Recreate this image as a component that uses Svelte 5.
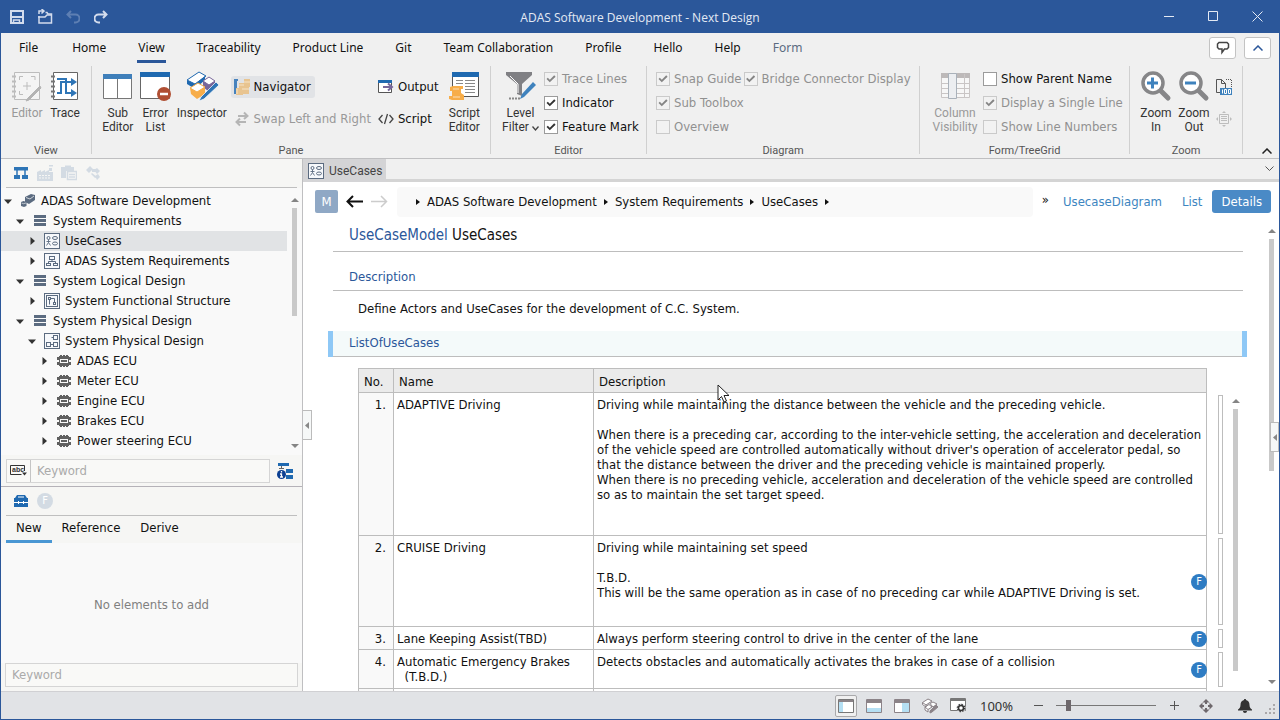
<script>
  const menu = ['File', 'Home', 'View', 'Traceability', 'Product Line', 'Git', 'Team Collaboration', 'Profile', 'Hello', 'Help', 'Form'];

  const tree = [
    { level: 0, open: true, icon: 'project', label: 'ADAS Software Development' },
    { level: 1, open: true, icon: 'stack', label: 'System Requirements' },
    { level: 2, open: false, icon: 'usecase', label: 'UseCases', selected: true },
    { level: 2, open: false, icon: 'hierarchy', label: 'ADAS System Requirements' },
    { level: 1, open: true, icon: 'stack', label: 'System Logical Design' },
    { level: 2, open: false, icon: 'functional', label: 'System Functional Structure' },
    { level: 1, open: true, icon: 'stack', label: 'System Physical Design' },
    { level: 2, open: true, icon: 'physical', label: 'System Physical Design' },
    { level: 3, open: false, icon: 'chip', label: 'ADAS ECU' },
    { level: 3, open: false, icon: 'chip', label: 'Meter ECU' },
    { level: 3, open: false, icon: 'chip', label: 'Engine ECU' },
    { level: 3, open: false, icon: 'chip', label: 'Brakes ECU' },
    { level: 3, open: false, icon: 'chip', label: 'Power steering ECU' },
    { level: 3, open: false, icon: 'chip', label: '' }
  ];

  const crumbs = ['ADAS Software Development', 'System Requirements', 'UseCases'];

  const rows = [
    {
      name: ['ADAPTIVE Driving'],
      height: 143,
      lines: [
        'Driving while maintaining the distance between the vehicle and the preceding vehicle.',
        '',
        'When there is a preceding car, according to the inter-vehicle setting, the acceleration and deceleration',
        "of the vehicle speed are controlled automatically without driver's operation of accelerator pedal, so",
        'that the distance between the driver and the preceding vehicle is maintained properly.',
        'When there is no preceding vehicle, acceleration and deceleration of the vehicle speed are controlled',
        'so as to maintain the set target speed.'
      ]
    },
    {
      name: ['CRUISE Driving'],
      height: 91,
      feature: true,
      lines: [
        'Driving while maintaining set speed',
        '',
        'T.B.D.',
        'This will be the same operation as in case of no preceding car while ADAPTIVE Driving is set.'
      ]
    },
    {
      name: ['Lane Keeping Assist(TBD)'],
      height: 23,
      feature: true,
      lines: ['Always perform steering control to drive in the center of the lane']
    },
    {
      name: ['Automatic Emergency Brakes', '  (T.B.D.)'],
      height: 39,
      feature: true,
      lines: ['Detects obstacles and automatically activates the brakes in case of a collision']
    }
  ];

  let zoom = $state(10);
</script>

{#snippet usecase()}
  <svg width="16" height="16" viewBox="0 0 16 16" fill="none" stroke="#5b6b80">
    <rect x=".5" y=".5" width="15" height="15" fill="#f6f8fb" />
    <circle cx="4.500" cy="5" r="1.500" /><path d="M4.500 6.500v3M2.500 8.500h4M4.500 9.500l-2 3M4.500 9.500l2 3" stroke-width=".9" />
    <ellipse cx="11" cy="5" rx="2.500" ry="1.500" /><ellipse cx="11" cy="10.500" rx="2.500" ry="1.500" />
  </svg>
{/snippet}

{#snippet treeIcon(name)}
  {#if name === 'usecase'}
    {@render usecase()}
  {:else if name === 'project'}
    <svg width="16" height="16" viewBox="0 0 16 16" fill="#5b6b80">
      <path d="M5 4l6-3 4 1v5l-6 4-4-2z" /><path d="M6 4.500l4 1.500 4-3" fill="none" stroke="#fff" stroke-width=".7" />
      <path d="M1 9l2.500-1 3 1v4l-2.500 1-3-1z" /><path d="M1.500 10l2 .7 2.500-.7" fill="none" stroke="#fff" stroke-width=".6" />
    </svg>
  {:else if name === 'stack'}
    <svg width="12" height="12" viewBox="0 0 12 12" fill="#5b6b80"><path d="M0 0h12v3H0zM0 4h12v3H0zM0 8h12v3H0z" /></svg>
  {:else if name === 'hierarchy'}
    <svg width="16" height="16" viewBox="0 0 16 16" fill="none" stroke="#5b6b80">
      <rect x=".5" y=".5" width="15" height="15" fill="#f6f8fb" />
      <rect x="5.500" y="3.500" width="5" height="3" /><path d="M8 6.500v2M4.500 10.500v-2h7v2" /><rect x="2.500" y="10.500" width="4" height="2" /><rect x="9.500" y="10.500" width="4" height="2" />
    </svg>
  {:else if name === 'functional'}
    <svg width="16" height="16" viewBox="0 0 16 16" fill="none" stroke="#5b6b80">
      <rect x=".5" y=".5" width="15" height="15" fill="#f6f8fb" /><rect x="2.500" y="2.500" width="11" height="11" />
      <rect x="4.500" y="4.500" width="2" height="2" /><path d="M5.500 6.500v5M7 5.500h3.500v4" /><rect x="9.500" y="9.500" width="2" height="2" />
    </svg>
  {:else if name === 'physical'}
    <svg width="16" height="16" viewBox="0 0 16 16" fill="none" stroke="#5b6b80">
      <rect x=".5" y=".5" width="15" height="15" fill="#f6f8fb" />
      <rect x="9.500" y="2.500" width="4" height="4" /><rect x="2.500" y="9.500" width="4" height="4" /><rect x="9.500" y="9.500" width="4" height="4" /><path d="M6.500 11.500h3M9.500 4.500h-2" />
    </svg>
  {:else}
    <svg width="14" height="12" viewBox="0 0 14 12" fill="#606060">
      <path d="M2 1h10v10H2z" /><path d="M3 0h2v2H3zM6 0h2v2H6zM9 0h2v2H9zM3 10h2v2H3zM6 10h2v2H6zM9 10h2v2H9zM0 2h3v3H0zM0 7h3v3H0zM11 2h3v3h-3zM11 7h3v3h-3z" />
      <path d="M3 4h8v4H3z" fill="#f9f9f9" /><path d="M4 5h6v2H4z" />
    </svg>
  {/if}
{/snippet}

{#snippet check(label, checked, disabled)}
  <label class="check" class:off={disabled}><input type="checkbox" {checked} {disabled} /><span>{label}</span></label>
{/snippet}

{#snippet toolbox(color)}
  <svg width="14" height="14" viewBox="0 0 14 14">
    <path d="M3 1h8l2 3h1v9H0V4h1z" fill={color} /><path d="M4 3h6" stroke="#fff" /><path d="M0 8.500h4M5 8.500h4M10 8.500h4M4.500 7v3M9.500 7v3" stroke="#fff" />
  </svg>
{/snippet}

{#snippet magnifier(plus)}
  <svg width="32" height="32" viewBox="0 0 32 32" fill="none">
    <path d="M21 21l7 7" stroke="#868688" stroke-width="5" stroke-linecap="round" />
    <circle cx="13" cy="13" r="10" fill="#fff" stroke="#868688" stroke-width="3.500" />
    <path d={plus ? 'M7 13h11M12.500 7.500v11' : 'M7 13h11'} stroke="#3f82bd" stroke-width="3" />
  </svg>
{/snippet}

<div class="window">
  <header class="titlebar">
    <div class="quick">
      <button aria-label="Save"><svg width="14" height="14" viewBox="0 0 14 14" fill="none" stroke="#d3dced" stroke-width="2"><path d="M1 1h12v12H1zM2 7h10" /><path d="M3.500 13v-3h6v3" stroke-width="1.500" /></svg></button>
      <button aria-label="Open"><svg width="15" height="15" viewBox="0 0 15 15" fill="none" stroke="#d3dced" stroke-width="1.500"><path d="M1 7v7h12.500V5H10L9 3.500H7.500" /><path d="M0 8h7l2-2h5M1 5V2h5M3.500 0L6 2 3.500 4.500" /></svg></button>
      <button aria-label="Undo" class="dim"><svg width="14" height="14" viewBox="0 0 14 14" fill="none" stroke="#d3dced" stroke-width="2"><path d="M5 1L1.500 4.500 5 8M1.500 4.500h8a3.500 3.500 0 0 1 0 8H8" /></svg></button>
      <button aria-label="Redo"><svg width="14" height="14" viewBox="0 0 14 14" fill="none" stroke="#d3dced" stroke-width="2"><path d="M9 1l3.500 3.500L9 8M12.500 4.500h-8a3.500 3.500 0 0 0 0 8H6" /></svg></button>
    </div>
    <h1>ADAS Software Development - Next Design</h1>
    <div class="sys">
      <button aria-label="Minimize"><svg width="11" height="11" viewBox="0 0 11 11" stroke="#e4eaf4"><path d="M0 5.500h10" /></svg></button>
      <button aria-label="Maximize"><svg width="11" height="11" viewBox="0 0 11 11" fill="none" stroke="#e4eaf4"><path d="M.5.5h9v9h-9z" /></svg></button>
      <button aria-label="Close"><svg width="11" height="11" viewBox="0 0 11 11" stroke="#e4eaf4"><path d="M.5.5l10 10M10.500.5l-10 10" /></svg></button>
    </div>
  </header>

  <nav class="menu">
    {#each menu as item}
      <button class:active={item === 'View'} class:context={item === 'Form'}>{item}</button>
    {/each}
    <div class="menuend">
      <button aria-label="Feedback"><svg width="14" height="14" viewBox="0 0 14 14" fill="none" stroke="#444" stroke-width="1.500"><path d="M3 1.500h8l1.500 1.500v3.500L11 8H8.500L6 11.500V8H3L1.500 6.500V3z" /></svg></button>
      <button aria-label="Hide tabs"><svg width="10" height="6" viewBox="0 0 10 6" fill="none" stroke="#2b579a" stroke-width="1.500"><path d="M.5 5.500L5 1l4.500 4.500" /></svg></button>
    </div>
  </nav>

  <section class="ribbon" aria-label="Ribbon">
    <div class="group view">
      <div class="body">
        <button class="big" disabled>
          <svg width="32" height="32" viewBox="0 0 32 32" fill="none" stroke="#bcbcbc">
            <path d="M3.500 2.500h25v27h-25z" fill="#f4f4f4" /><path d="M1 6.500h4M1 11.500h4M1 16.500h4M1 21.500h4M1 26.500h4" stroke-width="2" />
            <path d="M8.500 10V6.500H12M20 6.500h4V10M8.500 21v3.500H12M16 12v8M12 16h8" /><path d="M29 16l-12 12-2 3 3-1 12-12z" fill="#b4b4b4" stroke="#b4b4b4" />
          </svg><span>Editor</span>
        </button>
        <button class="big">
          <svg width="32" height="32" viewBox="0 0 32 32" fill="none">
            <path d="M4.500 2.500h24v27h-24z" fill="#fff" stroke="#666" /><path d="M2 6.500h4M2 11.500h4M2 16.500h4M2 21.500h4M2 26.500h4" stroke="#777" stroke-width="2" />
            <path d="M8 9h9v14h7M8 23h4V12h12" stroke="#2e75b6" stroke-width="2" /><path d="M22 8l6 4-6 4zM22 19l6 4-6 4z" fill="#2e75b6" />
          </svg><span>Trace</span>
        </button>
      </div>
      <div class="caption">View</div>
    </div>

    <div class="group pane">
      <div class="body">
        <button class="big">
          <svg width="32" height="32" viewBox="0 0 32 32"><path d="M1.500 4.500h28v24h-28z" fill="#fff" stroke="#777" /><path d="M1 4h29v5H1z" fill="#3f7fba" /><path d="M15.500 9v20" stroke="#777" /></svg><span>Sub<br />Editor</span>
        </button>
        <button class="big">
          <svg width="32" height="32" viewBox="0 0 32 32"><path d="M1.500 2.500h29v26h-29z" fill="#fff" stroke="#666" /><path d="M1 2h30v5H1z" fill="#1f69b0" /><circle cx="25" cy="24" r="7" fill="#b04f33" /><path d="M21 24h8" stroke="#fff" stroke-width="2.500" /></svg><span>Error<br />List</span>
        </button>
        <button class="big wide">
          <svg width="34" height="32" viewBox="0 0 34 32" stroke-linejoin="round">
            <path d="M2 10L14 2l7 4-11 8z" fill="#fff" stroke="#1f69b0" /><path d="M2 10v4l8 5v-5z" fill="#1f69b0" /><path d="M10 14l10-8v4l-8 7z" fill="#1f69b0" />
            <path d="M18 11l6-4 6 4-6 4z" fill="#fff" stroke="#77669a" /><path d="M18 11l6 4 6-4v4l-7 6-5-4z" fill="#77669a" />
            <path d="M5 18l8-5 7 4-8 5z" fill="#fff" stroke="#f7ad49" /><path d="M5 18l7 4 8-5v7l-8 5-6-5z" fill="#f7ad49" />
            <path d="M16 27L31 12l3 3-15 14-5 2z" fill="#2e75b6" stroke="#fff" stroke-width=".7" />
          </svg><span>Inspector</span>
        </button>
        <div class="column nav">
          <button class="small on">
            <svg width="16" height="16" viewBox="0 0 16 16"><path d="M0 0h4v2H3v11h1v2H0z" fill="#4682bd" /><path d="M10 0h6v8h-6zM5 4h6v5H5zM2 9h7v7H2zM8 8h7v7H8z" fill="#e8c490" /><path d="M10 3h6M5 6h5M8 10h7M3 10v5" stroke="#f6e4c8" /></svg><span>Navigator</span>
          </button>
          <button class="small" disabled>
            <svg width="16" height="16" viewBox="0 0 16 16" fill="none" stroke="#b5b5b5" stroke-width="2"><path d="M4 5h9M10 1.500L13.500 5 10 8M12 11H3M6 7.500L2.500 11 6 14.500" /></svg><span>Swap Left and Right</span>
          </button>
        </div>
        <div class="column">
          <button class="small">
            <svg width="16" height="16" viewBox="0 0 16 16"><path d="M.5 1.500h13v12H.5z" fill="#fff" stroke="#555" /><path d="M0 1h14v3H0z" fill="#1f69b0" /><path d="M5 8h8M10 4.500L14 8l-4 3.500" fill="none" stroke="#77669a" stroke-width="2" /></svg><span>Output</span>
          </button>
          <button class="small">
            <svg width="16" height="16" viewBox="0 0 16 16" fill="none" stroke="#444" stroke-width="1.300"><path d="M4.500 4L1 8l3.500 4M11.500 4L15 8l-3.500 4M9.500 3l-3 10" /></svg><span>Script</span>
          </button>
        </div>
        <button class="big script">
          <svg width="32" height="32" viewBox="0 0 32 32"><path d="M4.500 2.500h26v24h-26z" fill="#fff" stroke="#555" /><path d="M4 2h27v5H4z" fill="#1f69b0" /><path d="M8 10.500h7M8 13.500h7M12 16.500h3M17 10.500h10M17 13.500h10M17 16.500h10M17 19.500h10M17 22.500h10" stroke="#888" /><path d="M5 16h10v3h-2v4l3 2v5H4l-3-1v-3h3v-5H2v-4z" fill="#f7ad49" /><path d="M5 19h6M5 27h7" stroke="#fff" stroke-width=".6" /></svg><span>Script<br />Editor</span>
        </button>
      </div>
      <div class="caption">Pane</div>
    </div>

    <div class="group edit">
      <div class="body">
        <button class="big level">
          <svg width="32" height="32" viewBox="0 0 32 32"><path d="M1 2h26v3l-10 9v12l-5-2V14L1 5z" fill="#808084" /><path d="M5 6l8 8v9" fill="none" stroke="#fff" /><path d="M17 24L28 12l3 3-12 12-4 2z" fill="#3f82bd" /><path d="M4 28.500h11" stroke="#888" stroke-width="2" stroke-dasharray="2 1" /></svg>
          <span>Level<br />Filter <svg width="7" height="5" viewBox="0 0 7 5" fill="none" stroke="#444" stroke-width="1.300"><path d="M.5.5l3 3.500 3-3.500" /></svg></span>
        </button>
        <div class="checks">
          {@render check('Trace Lines', true, true)}
          {@render check('Indicator', true, false)}
          {@render check('Feature Mark', true, false)}
        </div>
      </div>
      <div class="caption">Editor</div>
    </div>

    <div class="group diagram">
      <div class="body">
        <div class="checks">
          {@render check('Snap Guide', true, true)}
          {@render check('Sub Toolbox', true, true)}
          {@render check('Overview', false, true)}
        </div>
        <div class="checks">
          {@render check('Bridge Connector Display', true, true)}
        </div>
      </div>
      <div class="caption">Diagram</div>
    </div>

    <div class="group form">
      <div class="body">
        <button class="big column-vis" disabled>
          <svg width="32" height="32" viewBox="0 0 32 32" fill="none" stroke="#c9c5c5"><path d="M2.500 4.500h28v23h-28z" fill="#f7f7f7" /><path d="M2 3h29v5H2z" fill="#bdb9b9" stroke="none" /><path d="M2 13.500h29M2 18.500h29M2 23.500h29M25.500 4v24" /><path d="M9.500 3.500h8v25h-8z" fill="#eceef1" stroke="#a9b1ba" /></svg><span>Column<br />Visibility</span>
        </button>
        <div class="checks">
          {@render check('Show Parent Name', false, false)}
          {@render check('Display a Single Line', true, true)}
          {@render check('Show Line Numbers', false, true)}
        </div>
      </div>
      <div class="caption">Form/TreeGrid</div>
    </div>

    <div class="group zoom">
      <div class="body">
        <button class="big">{@render magnifier(true)}<span>Zoom<br />In</span></button>
        <button class="big">{@render magnifier(false)}<span>Zoom<br />Out</span></button>
        <div class="column">
          <button class="small" aria-label="Zoom to 100%">
            <svg width="16" height="16" viewBox="0 0 16 16" fill="none" stroke="#555"><path d="M4 13.500H.5V.5h5l4 4V9M5.500.5v4h4" /><path d="M10 .5h5.500V9" stroke-dasharray="1 1" /><path d="M4 9h12v7H4z" fill="#3f82bd" stroke="none" /><path d="M6.500 10.500v4M8.500 10.500h2v4h-2zM12.500 10.500h2v4h-2z" stroke="#fff" /></svg>
          </button>
          <button class="small" aria-label="Fit to window" disabled>
            <svg width="16" height="16" viewBox="0 0 16 16" fill="none" stroke="#bdbdbd"><path d="M3.500 3.500h9v9h-9zM5 5.500h6M5 7.500h6M5 9.500h6" /><path d="M8 0l2 2H6zM8 16l2-2H6zM0 8l2-2v4zM16 8l-2-2v4z" fill="#bdbdbd" stroke="none" /></svg>
          </button>
        </div>
      </div>
      <div class="caption">Zoom</div>
    </div>
    <button class="collapse" aria-label="Collapse ribbon"><svg width="10" height="6" viewBox="0 0 10 6" fill="none" stroke="#222" stroke-width="1.500"><path d="M.5 5.500L5 1l4.500 4.500" /></svg></button>
  </section>

  <main>
    <aside>
      <div class="tools">
        <button aria-label="Model tree"><svg width="14" height="14" viewBox="0 0 14 14" fill="#2e75b6"><path d="M0 1h14v3.500H0zM0 9h6v4H0zM8 9h6v4H8z" /><path d="M3 4v5M11 4v5" stroke="#2e75b6" stroke-width="1.500" /></svg></button>
        <button aria-label="Product line"><svg width="16" height="16" viewBox="0 0 16 16" fill="#d3dbe3"><path d="M0 16V7l4-2v2l4-2v2l4-2v2h4v9zM12 3h3v3h-3zM12 0h4v1.500h-4z" /><path d="M2 10.500h12M2 13h12" stroke="#f6f6f4" stroke-dasharray="2 1" /></svg></button>
        <button aria-label="Documents"><svg width="16" height="16" viewBox="0 0 16 16" fill="#d3dbe3"><path d="M0 2h4V.5h6V2h3v4H5v7H0z" /><path d="M6.500 6.500h9v8h-9zM8 9.500h6M8 12h6" fill="none" stroke="#d3dbe3" stroke-width="1.500" /></svg></button>
        <button aria-label="Relations"><svg width="16" height="16" viewBox="0 0 16 16" fill="#d3dbe3"><path d="M1 5l4-4 3 3-4 4zM7 4h4v3H7zM9 5l3-2 3 3-3 3zM10 11l3-2 2 3-3 3zM7 8l5 4-2 1-4-4z" /></svg></button>
      </div>
      <div class="treebox">
        <ul class="tree" role="tree">
          {#each tree as node}
            <li role="treeitem" aria-selected={!!node.selected} class="level{node.level}" class:selected={node.selected}>
              <span class="toggle">
                {#if node.open}<svg width="8" height="5" viewBox="0 0 8 5"><path d="M0 .5h8L4 5z" fill="#333" /></svg>{:else}<svg width="6" height="8" viewBox="0 0 6 8"><path d="M1.500 0v8L6 4z" fill="#333" /></svg>{/if}
              </span>
              <span class="icon">{@render treeIcon(node.icon)}</span>
              <span>{node.label}</span>
            </li>
          {/each}
        </ul>
        <div class="scroll"><i class="up"></i><b class="tree-thumb"></b><i class="down"></i></div>
      </div>
      <div class="search">
        <div class="field">
          <button aria-label="Match mode"><svg width="17" height="13" viewBox="0 0 17 13" fill="none" stroke="#333"><path d="M14.500 7V1.500H.5v9h11" /><text x="2" y="8" font-family="Liberation Sans" font-size="7" font-weight="bold" fill="#333" stroke="none">abc</text><path d="M12 8.500h5L14.500 11.500z" fill="#333" stroke="none" /></svg></button>
          <input type="text" placeholder="Keyword" aria-label="Search model" />
        </div>
        <button class="info" aria-label="Show model information"><svg width="16" height="16" viewBox="0 0 16 16"><path d="M1 0h11v3H1zM9 6h7v4H9zM9 12h7v4H9z" fill="#1f69b0" /><path d="M4.500 3v3M2 5.500h5" stroke="#666" /><circle cx="4.500" cy="11.500" r="4.500" fill="#0b3f92" /><path d="M4.500 8v1.500M3 11h1.500v3M3 14h3" stroke="#fff" stroke-width="1.300" fill="none" /></svg></button>
      </div>
      <div class="tools lower">
        <button aria-label="Toolbox">{@render toolbox('#1f69b0')}</button>
        <button aria-label="Features"><span class="feature pale">F</span></button>
      </div>
      <div class="subtabs">
        <button class="active">New</button><button>Reference</button><button>Derive</button>
      </div>
      <div class="empty">No elements to add</div>
      <div class="filter"><input type="text" placeholder="Keyword" aria-label="Filter elements" /></div>
    </aside>

    <section class="work">
      <button class="handle left" aria-label="Collapse navigator"><svg width="4" height="7" viewBox="0 0 4 7"><path d="M4 0v7L0 3.500z" fill="#888" /></svg></button>
      <button class="handle right" aria-label="Expand inspector"><svg width="4" height="7" viewBox="0 0 4 7"><path d="M4 0v7L0 3.500z" fill="#888" /></svg></button>
      <div class="doctabs">
        <button class="doctab">{@render usecase()}<span>UseCases</span></button>
        <button class="more" aria-label="Open documents"><svg width="9" height="6" viewBox="0 0 9 6" fill="none" stroke="#555"><path d="M.5.5l4 4 4-4" /></svg></button>
      </div>

      <div class="path">
        <button class="model">M</button>
        <button aria-label="Back"><svg width="17" height="13" viewBox="0 0 17 13" fill="none" stroke="#111" stroke-width="2"><path d="M7 1L1.500 6.500 7 12M1.500 6.500H17" /></svg></button>
        <button aria-label="Forward" disabled><svg width="17" height="13" viewBox="0 0 17 13" fill="none" stroke="#ccc" stroke-width="1.500"><path d="M10 1l5.500 5.500L10 12M15.500 6.500H0" /></svg></button>
        <div class="crumbs">
          {#each crumbs as crumb}<i></i><a href="#{crumb}">{crumb}</a>{/each}<i></i>
        </div>
        <span class="chev">»</span>
        <button class="viewlink">UsecaseDiagram</button>
        <button class="viewlink">List</button>
        <button class="details">Details</button>
      </div>

      <div class="page">
        <div class="doc">
          <h2><span>UseCaseModel</span> UseCases</h2>
          <h3>Description</h3>
          <p>Define Actors and UseCases for the development of C.C. System.</p>
          <h3 class="current">ListOfUseCases</h3>
          <div class="list">
            <table>
              <thead><tr><th class="no">No.</th><th class="name">Name</th><th>Description</th></tr></thead>
              <tbody>
                {#each rows as row, i}
                  <tr style="height: {row.height}px">
                    <td class="no">{i + 1}.</td>
                    <td class="name">{row.name.join('\n')}</td>
                    <td class="desc">{row.lines.join('\n')}{#if row.feature}<span class="feature">F</span>{/if}</td>
                  </tr>
                {/each}
                <tr class="blank"><td class="no"></td><td></td><td></td></tr>
              </tbody>
            </table>
            <div class="marks">
              {#each rows as row}<span style="height: {row.height - 4}px"></span>{/each}
            </div>
            <div class="scroll inner"><i class="up"></i><b class="list-thumb"></b></div>
          </div>
        </div>
        <div class="scroll outer"><i class="up"></i><b class="page-thumb"></b><i class="down"></i></div>
      </div>
      <svg class="cursor" width="13" height="20" viewBox="0 0 13 20"><path d="M1 1v15l3.500-3.500L7 18l2.500-1-2.500-5.500h5z" fill="#fff" stroke="#222" /></svg>
    </section>
  </main>

  <footer>
    <button class="pressed" aria-label="Left pane"><svg width="16" height="14" viewBox="0 0 16 14"><path d="M.5.5h15v13H.5z" fill="#fff" stroke="#777" /><path d="M1 1h14v2H1z" fill="#8b8388" /><path d="M1 3h4v10H1z" fill="#b5dff3" /></svg></button>
    <button aria-label="Bottom pane"><svg width="16" height="14" viewBox="0 0 16 14"><path d="M.5.5h15v13H.5z" fill="#fff" stroke="#8b8388" /><path d="M1 1h14v3H1z" fill="#8b8388" /><path d="M1 9h14v4H1z" fill="#b5dff3" /></svg></button>
    <button aria-label="Right pane"><svg width="16" height="14" viewBox="0 0 16 14"><path d="M.5.5h15v13H.5z" fill="#fff" stroke="#8b8388" /><path d="M1 1h14v3H1z" fill="#8b8388" /><path d="M8 4h7v9H8z" fill="#b5dff3" /></svg></button>
    <button aria-label="Inspector"><svg width="16" height="16" viewBox="0 0 16 16" fill="#fff" stroke="#8b8388"><path d="M.5 4.500L6 1l4 2-6 4zM.5 4.500v2L4 9V7M8 5.500L11 4l4 2-4 3zM3 9l4-2.500L10 9l-4 2.500zM3 9v3l3 2v-2.500" /><path d="M8 13l6-6 2 2-6 5-2 1z" fill="#8b8388" /></svg></button>
    <button aria-label="Window settings"><svg width="16" height="15" viewBox="0 0 16 15"><path d="M.5.5h15v12H.5z" fill="#fff" stroke="#777" /><path d="M1 1h14v2H1z" fill="#777" /><circle cx="11" cy="10" r="4.500" fill="#e1e3e6" /><circle cx="11" cy="10" r="2.500" fill="#fff" stroke="#333" stroke-width="1.500" /><circle cx="11" cy="10" r="3.700" fill="none" stroke="#333" stroke-width="1.200" stroke-dasharray="1.400 1.500" /></svg></button>
    <output for="zoom">100%</output>
    <button class="step" aria-label="Zoom out"><svg width="9" height="9" viewBox="0 0 9 9" stroke="#555"><path d="M0 4.500h9" /></svg></button>
    <input id="zoom" type="range" aria-label="Zoom" bind:value={zoom} />
    <button class="step" aria-label="Zoom in"><svg width="9" height="9" viewBox="0 0 9 9" stroke="#555"><path d="M0 4.500h9M4.500 0v9" /></svg></button>
    <button class="fit" aria-label="Fit"><svg width="14" height="14" viewBox="0 0 14 14" fill="#6e686c"><path d="M7 0l3.500 3.500h-7zM7 14l3.500-3.500h-7zM0 7l3.500-3.500v7zM14 7l-3.500-3.500v7z" /><path d="M6 3h2v2H6zM6 9h2v2H6zM3 6h2v2H3zM9 6h2v2H9z" /></svg></button>
    <button class="bell" aria-label="Notifications"><svg width="14" height="14" viewBox="0 0 14 14" fill="#333"><path d="M7 0c1 0 1 .6 1 1 2.500.6 3.500 2.500 3.500 5 0 2 1 3.500 2.500 4.500v1H0v-1C1.500 9.500 2.500 8 2.500 6c0-2.500 1-4.400 3.500-5 0-.4 0-1 1-1zM5 12h4c0 1.300-.8 2-2 2s-2-.7-2-2z" /></svg></button>
    <svg class="grip" width="11" height="11" viewBox="0 0 11 11" fill="#aaa8aa"><path d="M8 0h2v2H8zM4 4h2v2H4zM8 4h2v2H8zM0 8h2v2H0zM4 8h2v2H4zM8 8h2v2H8z" /></svg>
  </footer>
</div>

<style>
  :global(body) { margin: 0; }
  * { box-sizing: border-box; }
  button, input { font: inherit; color: inherit; }
  button { display: flex; align-items: center; justify-content: center; margin: 0; padding: 0; border: 0; background: none; white-space: nowrap; }
  svg { display: block; flex: none; }

  .window {
    display: flex; flex-direction: column; height: 100vh; overflow: hidden;
    border: solid #2b579a; border-width: 0 1px 1px; background: #f0f0f0; color: #111;
    font: 13px/16px "DejaVu Sans Condensed", "Noto Sans", sans-serif;
  }

  .titlebar { display: grid; grid-template-columns: 1fr auto 1fr; align-items: center; flex: none; height: 33px; background: #2b579a; color: #e4eaf4; }
  .titlebar h1 { margin: 0; padding-top: 2px; font: 12px/16px "Open Sans", sans-serif; }
  .quick { display: flex; gap: 14px; padding-left: 9px; }
  .quick button { width: 14px; height: 15px; }
  .quick .dim { opacity: .3; }
  .sys { display: flex; justify-content: flex-end; gap: 33px; padding-right: 16px; }

  .menu { display: flex; align-items: flex-start; flex: none; height: 33px; padding-left: 2px; font: 12px/16px "Noto Sans", sans-serif; }
  .menu > button { height: 30px; padding: 2px 1px 0; margin: 0 15px; border-bottom: 3px solid transparent; }
  .menu > button:first-child { margin-right: 17px; }
  .menu > .active { border-color: #2b579a; }
  .menu > .context { color: #5b6b80; }
  .menuend { display: flex; gap: 8px; margin-left: auto; padding: 4px 8px 0 0; }
  .menuend button { width: 27px; height: 22px; border: 1px solid #c3c3c3; border-radius: 3px; background: #fff; }

  .ribbon { display: flex; flex: none; height: 93px; border-bottom: 1px solid #bfbfc1; }
  .group { display: flex; flex-direction: column; height: 88px; border-right: 1px solid #d0d0d0; }
  .body { display: flex; flex: 1; padding-top: 1px; }
  .caption { margin-bottom: -5px; color: #555; font: 11px/16px Roboto, sans-serif; text-align: center; }
  .big { flex-direction: column; justify-content: flex-start; gap: 4px; width: 38px; padding-top: 3px; font: 12px/14px Roboto, sans-serif; color: #333; }
  .big span svg { display: inline-block; }
  .big:disabled, .small:disabled { color: #999; }
  .wide { width: 56px; }
  .column { display: flex; flex-direction: column; align-items: flex-start; gap: 10px; padding-top: 9px; }
  .small { gap: 4px; height: 22px; }
  .small.on { border-radius: 3px; background: #e1e3e6; padding: 0 4px 0 3px; margin-left: -3px; }
  .checks { display: flex; flex-direction: column; }
  .check { display: flex; align-items: center; gap: 4px; height: 24px; white-space: nowrap; }
  .check.off { color: #909090; }
  .check input { position: relative; appearance: none; width: 14px; height: 14px; margin: 0; border: 1px solid #9b9b9b; background: #fff; color: #333; }
  .check.off input { border-color: #cacaca; background: #f2f2f2; color: #858585; }
  .check input:checked::after { content: ''; position: absolute; inset: 1px; background: currentColor; clip-path: polygon(5% 50%, 18% 37%, 38% 57%, 82% 13%, 96% 27%, 38% 83%); }
  .view { width: 91px; }
  .view .body { padding-left: 7px; }
  .pane { width: 399px; }
  .pane .body { padding-left: 7px; }
  .nav { width: 150px; padding-left: 4px; }
  .script { margin-left: auto; width: 52px; }
  .edit { width: 156px; }
  .level { width: 53px; padding-left: 6px; }
  .diagram { width: 273px; }
  .diagram .body { padding-left: 9px; }
  .form { width: 210px; }
  .column-vis { width: 63px; padding-left: 7px; }
  .zoom { width: 113px; }
  .zoom .body { padding-left: 7px; }
  .zoom .column { padding-left: 3px; }
  .collapse { align-self: flex-end; margin: 0 7px 4px auto; }

  main { display: flex; flex: 1; min-height: 0; background: #fff; }
  aside { display: flex; flex-direction: column; flex: none; width: 302px; border-right: 1px solid #bfbfc1; background: #f6f6f4; }
  .tools { display: flex; align-items: center; gap: 8px; flex: none; height: 29px; margin: 0 5px; padding-left: 7px; border-bottom: 1px solid #bfbfbf; }
  .tools button { width: 16px; height: 16px; }
  .treebox { display: flex; height: 267px; padding-top: 3px; background: #f9f9f9; }
  .tree { flex: 1; margin: 0; padding: 0; overflow: hidden; list-style: none; }
  .tree li { display: flex; align-items: center; gap: 5px; height: 20px; }
  .tree .level1 { padding-left: 12px; }
  .tree .level2 { padding-left: 24px; }
  .tree .level3 { padding-left: 36px; }
  .tree .selected { background: #e1e3e5; }
  .toggle { display: flex; justify-content: center; width: 14px; }
  .icon { display: flex; justify-content: center; width: 16px; }
  .scroll { display: flex; flex-direction: column; align-items: center; flex: none; width: 15px; gap: 6px; }
  .scroll i { border: solid transparent; border-width: 0 4px 4px; border-bottom-color: #858585; }
  .scroll .down { margin-top: auto; border-width: 4px 4px 0; border-top-color: #858585; }
  .scroll b { width: 5px; background: #c9c9c9; }
  .treebox .scroll { padding: 7px 0 7px; }
  .tree-thumb { height: 43%; }
  .search { display: flex; align-items: center; gap: 7px; flex: none; height: 32px; padding: 0 9px 0 5px; border-bottom: 1px solid #b5b2b8; }
  .field { display: flex; flex: 1; height: 24px; border: 1px solid #d5d5d5; background: #f9f9f7; }
  .field button { width: 24px; border-right: 1px solid #c5c5c5; }
  .field input, .filter input { min-width: 0; flex: 1; padding: 0 6px; border: 0; outline: 0; background: none; }
  input::placeholder { color: #aaa; opacity: 1; }
  .subtabs { display: flex; flex: none; height: 27px; padding-left: 5px; }
  .subtabs button { padding: 0 10px; border-bottom: 3px solid transparent; }
  .subtabs .active { border-color: #4a97d4; }
  .empty { display: flex; flex: 1; align-items: center; justify-content: center; padding-top: 4px; background: #f9f9f9; color: #808080; }
  .filter { display: flex; height: 24px; margin: 0 4px 4px; border: 1px solid #d5d5d5; background: #f9f9f7; }

  .work { position: relative; display: flex; flex-direction: column; flex: 1; min-width: 0; }
  .handle { position: absolute; z-index: 2; width: 9px; height: 30px; border: 1px solid #bbb; background: #f6f8f8; }
  .handle.left { left: 0; top: 251px; border-left: 0; }
  .handle.right { right: 0; top: 263px; }
  .doctabs { display: flex; justify-content: space-between; flex: none; height: 23px; border-bottom: 3px solid #d4d4d4; background: #f0f0f0; }
  .doctab { gap: 5px; height: 23px; padding: 0 4px 0 5px; background: #d4d4d6; color: #444; font: 12px/16px Roboto, sans-serif; }
  .more { padding-right: 5px; }
  .path { display: flex; align-items: center; flex: none; height: 39px; padding: 0 8px 0 12px; }
  .model { width: 23px; height: 23px; margin-right: 8px; border-radius: 2px; background: #8fa8c5; color: #fff; }
  .path > button + button { margin-right: 8px; }
  .crumbs { display: flex; align-items: center; gap: 7px; flex: 1; height: 30px; margin-left: 1px; padding-left: 19px; border-radius: 4px; background: #f9f9f9; white-space: nowrap; }
  .crumbs i { border: solid transparent; border-width: 3px 0 3px 4px; border-left-color: #111; }
  .crumbs a { color: inherit; text-decoration: none; }
  .chev { padding: 0 14px 4px 9px; }
  .path > .viewlink { margin-right: 20px; color: #3d85c0; }
  .path > .viewlink + .viewlink { margin-right: 10px; }
  .path > .details { height: 23px; margin: 0; padding: 0 9px; border-radius: 3px; background: #4a8ac6; color: #fff; }

  .page { display: flex; flex: 1; min-height: 0; overflow: hidden; }
  .doc { flex: 1; min-width: 0; padding-left: 30px; }
  h2, h3 { margin: 0 21px 0 0; padding-left: 16px; border-bottom: 1px solid #bdbdbd; font-weight: normal; }
  h2 { height: 31px; font-size: 15px; line-height: 28px; }
  h2 span, h3 { color: #2b579a; }
  h3 { height: 39px; padding-top: 12px; font-size: 13px; line-height: 26px; }
  p { margin: 0; padding: 10px 0 14px 25px; }
  .current { height: 26px; margin: 0 17px 0 -5px; padding: 0 0 0 16px; border: solid #8ec8f6; border-width: 0 5px; background: linear-gradient(#f4fafa 25px, #bdbdbd 25px); line-height: 24px; }
  .list { display: flex; margin: 11px 26px 0 25px; }
  table { flex: 1; border-collapse: collapse; table-layout: fixed; background: #fff; }
  th, td { padding: 4px 3px 3px; border: 1px solid #bdbdbd; line-height: 15px; vertical-align: top; text-align: left; white-space: pre; }
  th { height: 24px; padding: 5px 5px 3px; background: #ebebeb; font-weight: normal; }
  .blank { height: 23px; }
  .no { width: 35px; }
  .name { width: 200px; }
  td.no { padding-right: 7px; background: #f9f9f9; text-align: right; }
  .desc { position: relative; }
  .feature { display: flex; align-items: center; justify-content: center; width: 16px; height: 16px; border-radius: 50%; background: #2e7cc3; color: #fff; font-size: 11px; line-height: 16px; }
  .desc .feature { position: absolute; right: -1px; top: calc(50% - 7px); }
  .feature.pale { background: #d3dbe3; }
  .marks { display: flex; flex-direction: column; gap: 4px; width: 5px; margin: 27px 0 0 11px; }
  .marks span { flex: none; border: 1px solid #bdbdbd; }
  .inner { width: 5px; margin-left: 10px; padding-top: 31px; }
  .list-thumb { height: 262px; }
  .outer { padding: 8px 0 7px; }
  .page-thumb { height: 51%; }
  .cursor { position: absolute; left: 414px; top: 225px; }

  footer { display: flex; align-items: center; justify-content: flex-end; flex: none; height: 28px; padding-right: 3px; border-top: 1px solid #d0d0d3; background: #e1e3e6; }
  footer button { width: 28px; height: 22px; }
  footer .pressed { width: 22px; margin-right: 3px; border: 1px solid #a9a9ab; border-radius: 2px; background: #f0f0f0; }
  footer output { width: 48px; padding-left: 8px; font: 13px/18px "Noto Sans", sans-serif; color: #333; }
  footer .step { width: 36px; }
  .fit { margin-right: 11px; }
  .grip { align-self: flex-end; margin: 0 0 4px 6px; }
  footer input { appearance: none; width: 100px; height: 16px; margin: 0; background: linear-gradient(#777, #777) center / 100% 1px no-repeat; }
  footer input::-webkit-slider-thumb { appearance: none; width: 5px; height: 11px; background: #6e686c; }
</style>
